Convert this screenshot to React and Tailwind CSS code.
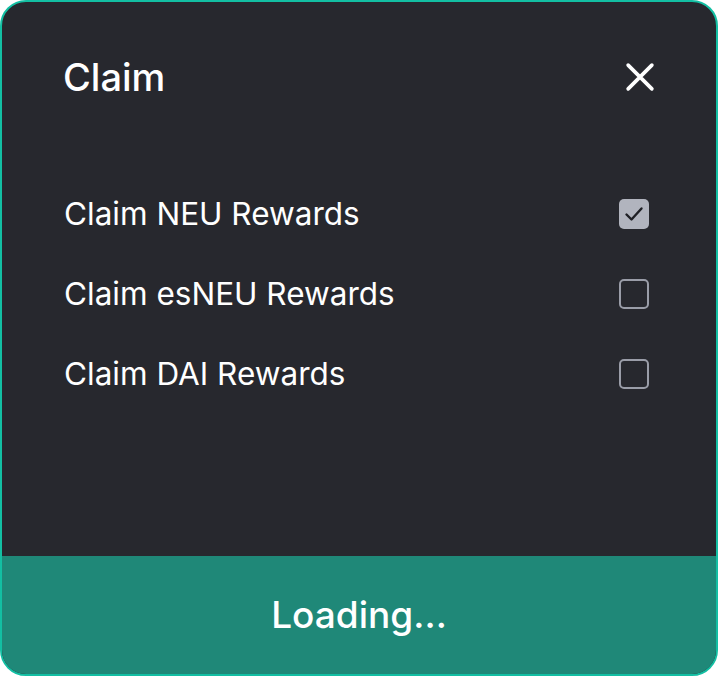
import React, { useState } from "react";

const rows = [
    { label: "Claim NEU Rewards", checked: true },
    { label: "Claim esNEU Rewards", checked: false },
    { label: "Claim DAI Rewards", checked: false },
];

const Checkbox = ({ checked, onClick }) => {
    return (
        <button
            onClick={onClick}
            className={`w-[30px] h-[30px] rounded-[5px] flex items-center justify-center ${checked ? "bg-[#b1b4be]" : "border-2 border-[#9a9da8]"}`}
        >
            {checked && (
                <svg viewBox="0 0 24 24" fill="none" stroke="#1f2025" strokeWidth="2.4" strokeLinecap="round" strokeLinejoin="round" className="w-[24px] h-[24px]">
                    <path d="M4.5 12.5l5 5L19.5 6.5"></path>
                </svg>
            )}
        </button>
    );
};

const App = () => {
    const [items, setItems] = useState(rows);

    const toggle = (i) => {
        setItems(items.map((it, idx) => (idx === i ? { ...it, checked: !it.checked } : it)));
    };

    return (
        <div className="w-[718px] h-[676px] bg-white" style={{ fontFamily: "Inter, 'Noto Sans', sans-serif" }}>
            <div className="w-full h-full flex flex-col rounded-[26px] border-2 border-[#13bfa3] bg-[#27282e] overflow-hidden">
                <div className="flex items-center justify-between pl-[61px] pr-[61px] pt-[53px]">
                    <h2 className="text-[38px] font-medium text-white leading-[44px]">Claim</h2>
                    <svg viewBox="0 0 24 24" fill="none" stroke="white" strokeWidth="2.9" strokeLinecap="round" className="w-[30px] h-[30px]">
                        <path d="M2.5 2.5l19 19M21.5 2.5l-19 19"></path>
                    </svg>
                </div>

                <div className="flex flex-col pl-[62px] pr-[67px] mt-[75px]">
                    {items.map((it, i) => (
                        <div key={it.label} className="flex items-center justify-between h-[80px]">
                            <span className="text-[31.5px] text-white">{it.label}</span>
                            <Checkbox checked={it.checked} onClick={() => toggle(i)} />
                        </div>
                    ))}
                </div>

                <button className="mt-auto h-[118px] bg-[#1f8878] text-white text-[37px] font-medium">
                    Loading…
                </button>
            </div>
        </div>
    );
};

export default App;
